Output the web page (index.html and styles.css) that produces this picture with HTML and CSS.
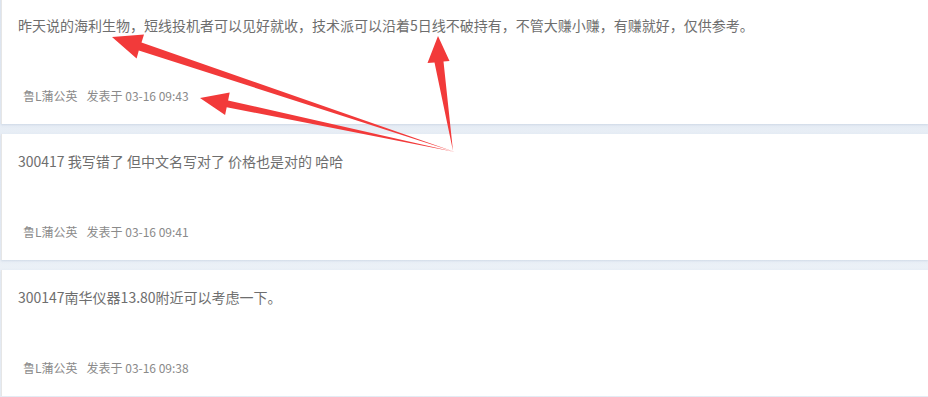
FILE: index.html
```html
<!DOCTYPE HTML>
<html>
<head>
	<meta charset="utf-8" />
	<title>评论</title>
	<link rel="stylesheet" href="styles.css">
</head>
<body>
	<div class="feed">
		<div class="post">
			<p class="text">昨天说的海利生物，短线投机者可以见好就收，技术派可以沿着5日线不破持有，不管大赚小赚，有赚就好，仅供参考。</p>
			<div class="meta"><span class="author">鲁L蒲公英</span>发表于 03-16 09:43</div>
		</div>
		<div class="post">
			<p class="text">300417 我写错了 但中文名写对了 价格也是对的 哈哈</p>
			<div class="meta"><span class="author">鲁L蒲公英</span>发表于 03-16 09:41</div>
		</div>
		<div class="post">
			<p class="text">300147南华仪器13.80附近可以考虑一下。</p>
			<div class="meta"><span class="author">鲁L蒲公英</span>发表于 03-16 09:38</div>
		</div>
	</div>
	<svg class="marks" width="928" height="397" viewBox="0 0 928 397">
		<polygon points="112,37 144,34.5 141.5,42.5 455,152 138.8,50.5 136.6,58.5" />
		<polygon points="200,98 229.7,92.5 228.1,100.4 455,152 226.7,107.2 225.1,115" />
		<polygon points="438,36 449.5,61 443.5,61.5 453,151 434.5,62.5 427.5,63" />
	</svg>
</body>
</html>
```

FILE: styles.css
```css
body {
	background: linear-gradient(#e4ebf4, #eef3f8);
	font-family: "Microsoft YaHei", "Noto Sans CJK SC", sans-serif;
	margin: 0;
	padding: 0;
	overflow: hidden;
}
.feed {
	display: flex;
	flex-direction: column;
	gap: 10px;
	margin-top: -2px;
}
.post {
	background-color: #fff;
	border-left: 1px solid #e6e6e6;
	box-shadow: 0 1px 2px rgba(180, 195, 215, .5);
	box-sizing: border-box;
	height: 126px;
	margin-left: 1px;
	padding: 17px 16px 0 16px;
}
.text {
	color: #6e6e6e;
	font-size: 14px;
	line-height: 20px;
	margin: 0;
}
.meta {
	color: #8a8a8a;
	font-size: 12px;
	line-height: 18px;
	margin-top: 52px;
	padding-left: 5px;
}
.author {
	margin-right: 9px;
}
.marks {
	left: 0;
	pointer-events: none;
	position: absolute;
	top: 0;
}
.marks polygon {
	fill: #f23a3a;
}
```
